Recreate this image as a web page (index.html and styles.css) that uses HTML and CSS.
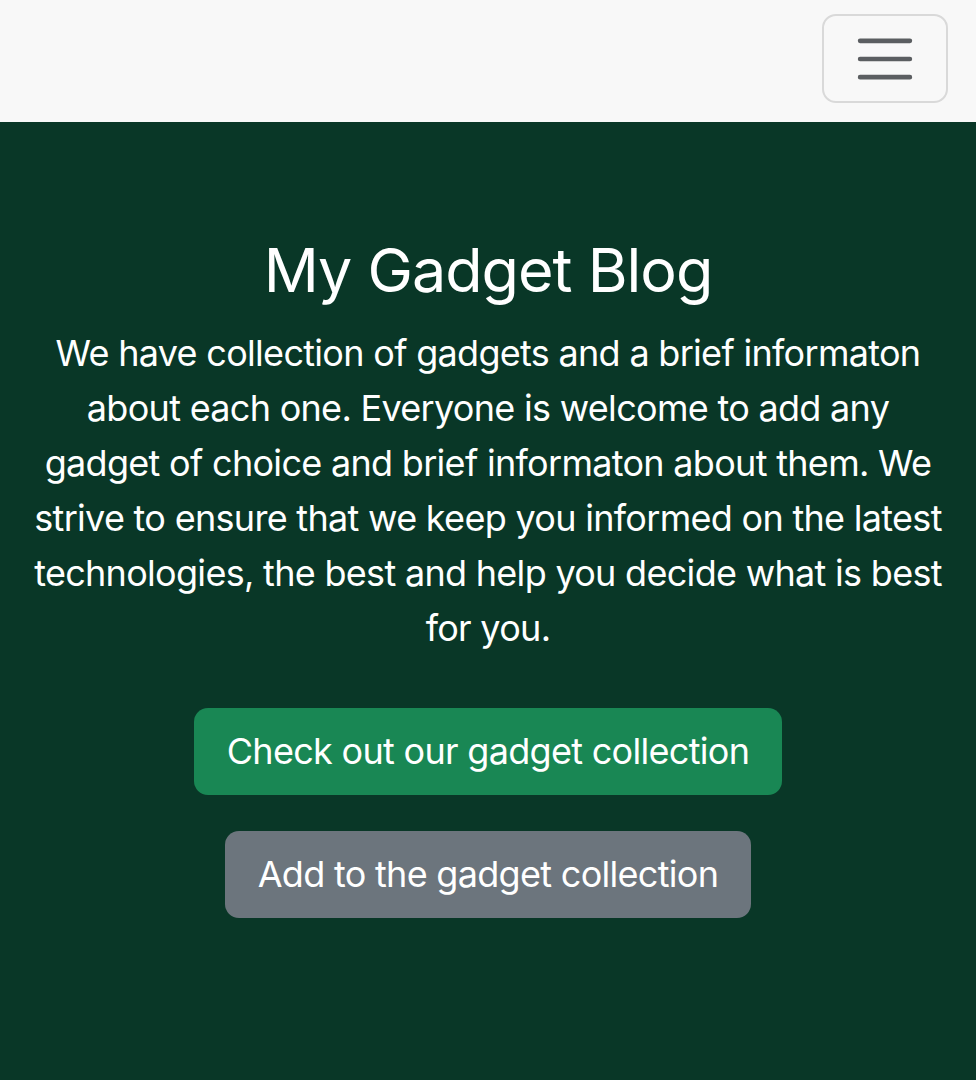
FILE: index.html
```html
<!DOCTYPE html>
<html lang="en">
<head>
<meta charset="utf-8">
<title>My Gadget Blog</title>
<link rel="stylesheet" href="styles.css">
</head>
<body>
<header class="navbar">
  <button class="toggler" type="button" aria-label="Toggle navigation">
    <svg class="toggler-icon" viewBox="0 0 30 30" width="68" height="68" aria-hidden="true">
      <path d="M4 7h22M4 15h22M4 23h22" stroke="#5b5e61" stroke-width="2" stroke-linecap="round" fill="none"/>
    </svg>
  </button>
</header>
<main class="hero">
  <h1 class="hero-title">My Gadget Blog</h1>
  <p class="hero-text">We have collection of gadgets and a brief informaton about each one. Everyone is welcome to add any gadget of choice and brief informaton about them. We strive to ensure that we keep you informed on the latest technologies, the best and help you decide what is best for you.</p>
  <div class="actions">
    <a class="btn btn-success" href="#">Check out our gadget collection</a>
    <a class="btn btn-secondary" href="#">Add to the gadget collection</a>
  </div>
</main>
</body>
</html>
```

FILE: styles.css
```css
* { box-sizing: border-box; }
html, body { margin: 0; padding: 0; }
body {
  font-family: Inter, "Noto Sans", "Liberation Sans", sans-serif;
  background: #093727;
  color: #ffffff;
}
.navbar {
  height: 122px;
  background: #f8f8f8;
  display: flex;
  justify-content: flex-end;
  align-items: flex-start;
  padding: 14px 28px 0 0;
}
.toggler {
  width: 126px;
  height: 89px;
  border: 2.3px solid #d9d9d9;
  border-radius: 14px;
  background: transparent;
  display: flex;
  align-items: center;
  justify-content: center;
  padding: 0;
}
.toggler-icon { display: block; }
.hero {
  min-height: 958px;
  padding: 112px 27px 60px;
  text-align: center;
  display: flex;
  flex-direction: column;
  align-items: center;
}
.hero-title {
  margin: 0 0 19px;
  font-size: 61px;
  font-weight: 400;
  line-height: 1.2;
  letter-spacing: -1px;
}
.hero-text {
  margin: 0 0 52px;
  font-size: 36px;
  line-height: 55px;
  letter-spacing: -0.7px;
}
.actions {
  display: flex;
  flex-direction: column;
  align-items: center;
  gap: 36px;
}
.btn {
  display: inline-block;
  padding: 14px 31px;
  border: 2.3px solid transparent;
  font-size: 36px;
  line-height: 55px;
  border-radius: 14px;
  color: #ffffff;
  text-decoration: none;
  letter-spacing: -0.7px;
}
.btn-success { background: #198754; }
.btn-secondary { background: #6c757d; }
```
